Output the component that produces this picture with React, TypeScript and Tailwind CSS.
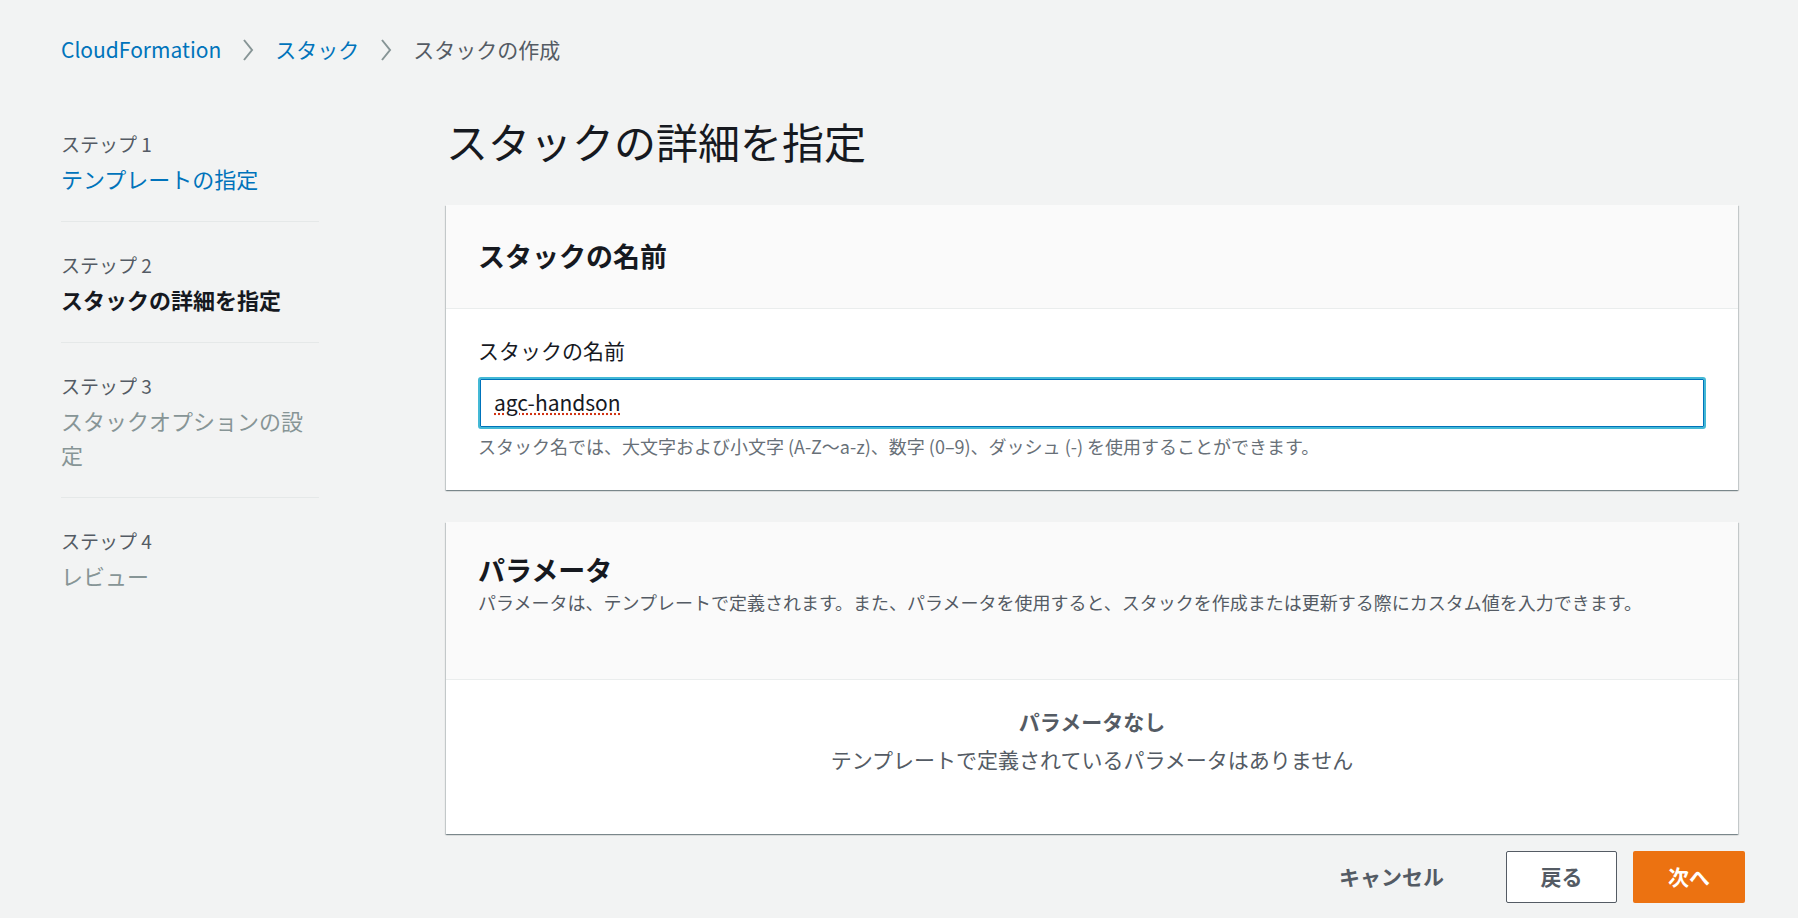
export default function App() {
  const f = { fontFamily: '"Noto Sans CJK JP", "Noto Sans", sans-serif' };
  return (
    <div style={f} className="w-[1798px] h-[918px] bg-[#f2f3f3] text-[#16191f] overflow-hidden">
      <div className="flex items-center gap-[20px] pl-[61px] pt-[33px] h-[66px] text-[21px]">
        <span className="text-[#0073bb]">CloudFormation</span>
        <svg width="14" height="24" viewBox="0 0 14 24"><path d="M3 2l8 10-8 10" stroke="#879596" strokeWidth="2" fill="none" /></svg>
        <span className="text-[#0073bb]">スタック</span>
        <svg width="14" height="24" viewBox="0 0 14 24"><path d="M3 2l8 10-8 10" stroke="#879596" strokeWidth="2" fill="none" /></svg>
        <span className="text-[#545b64]">スタックの作成</span>
      </div>
      <div className="flex pl-[61px] pt-[50px]">
        <div className="w-[258px] mr-[127px] pt-[21px]">
          <Step n="ステップ 1" name={<span className="text-[#0073bb]">テンプレートの指定</span>} />
          <Step n="ステップ 2" name={<span className="font-bold text-[#16191f]">スタックの詳細を指定</span>} />
          <Step n="ステップ 3" name={<span className="text-[#879596]">スタックオプションの設定</span>} />
          <Step n="ステップ 4" name={<span className="text-[#879596]">レビュー</span>} last />
        </div>
        <div className="w-[1292px]">
          <h1 className="text-[42px] leading-[50px] mb-[39px] text-[#16191f]">スタックの詳細を指定</h1>
          <div className="bg-white shadow-[0_1px_1px_0_rgba(0,28,36,0.3),1px_1px_1px_0_rgba(0,28,36,0.15),-1px_1px_1px_0_rgba(0,28,36,0.15)]">
            <div className="bg-[#fafafa] h-[104px] flex items-center px-[32px] border-b border-[#eaeded]">
              <h2 className="text-[27px] font-bold">スタックの名前</h2>
            </div>
            <div className="px-[32px] pt-[26px] pb-[30px]">
              <div className="text-[21px] leading-[30px]">スタックの名前</div>
              <div className="mt-[12px] h-[52px] border-2 border-[#44b9d6] rounded-[3px] flex items-center px-[14px] text-[21px] shadow-[0_0_0_1px_#0073bb_inset]">
                <span className="underline decoration-dotted decoration-[#d13212]">agc-handson</span>
              </div>
              <div className="text-[18px] text-[#687078] mt-[4px]">スタック名では、大文字および小文字 (A-Z〜a-z)、数字 (0–9)、ダッシュ (-) を使用することができます。</div>
            </div>
          </div>
          <div className="mt-[32px] bg-white shadow-[0_1px_1px_0_rgba(0,28,36,0.3),1px_1px_1px_0_rgba(0,28,36,0.15),-1px_1px_1px_0_rgba(0,28,36,0.15)]">
            <div className="bg-[#fafafa] h-[158px] px-[32px] pt-[30px] border-b border-[#eaeded]">
              <h2 className="text-[27px] font-bold leading-[36px]">パラメータ</h2>
              <p className="text-[18px] text-[#545b64] leading-[25px] mt-[2px] pr-[40px]">パラメータは、テンプレートで定義されます。また、パラメータを使用すると、スタックを作成または更新する際にカスタム値を入力できます。</p>
            </div>
            <div className="h-[154px] flex flex-col items-center pt-[22px]">
              <div className="text-[21px] font-bold text-[#545b64] leading-[38px]">パラメータなし</div>
              <div className="text-[21px] text-[#545b64] leading-[38px]">テンプレートで定義されているパラメータはありません</div>
            </div>
          </div>
          <div className="flex justify-end items-center mt-[17px] -mr-[7px] gap-[16px]">
            <button className="text-[21px] font-bold text-[#545b64] px-[24px] h-[52px] mr-[22px]">キャンセル</button>
            <button className="text-[21px] font-bold text-[#545b64] w-[111px] h-[52px] border border-[#545b64] rounded-[2px] bg-white">戻る</button>
            <button className="text-[21px] font-bold text-white w-[112px] h-[52px] rounded-[2px] bg-[#ec7211]">次へ</button>
          </div>
        </div>
      </div>
    </div>
  );
}

function Step({ n, name, last }: { n: string; name: React.ReactNode; last?: boolean }) {
  return (
    <div className={`pb-[26px] mb-[36px] ${last ? '' : 'border-b border-[#e5e8e8]'}`}>
      <div className="text-[19px] text-[#545b64] leading-[26px] mt-[-6px]">{n}</div>
      <div className="text-[22px] leading-[34px] mt-[4px] pr-[4px]">{name}</div>
    </div>
  );
}
